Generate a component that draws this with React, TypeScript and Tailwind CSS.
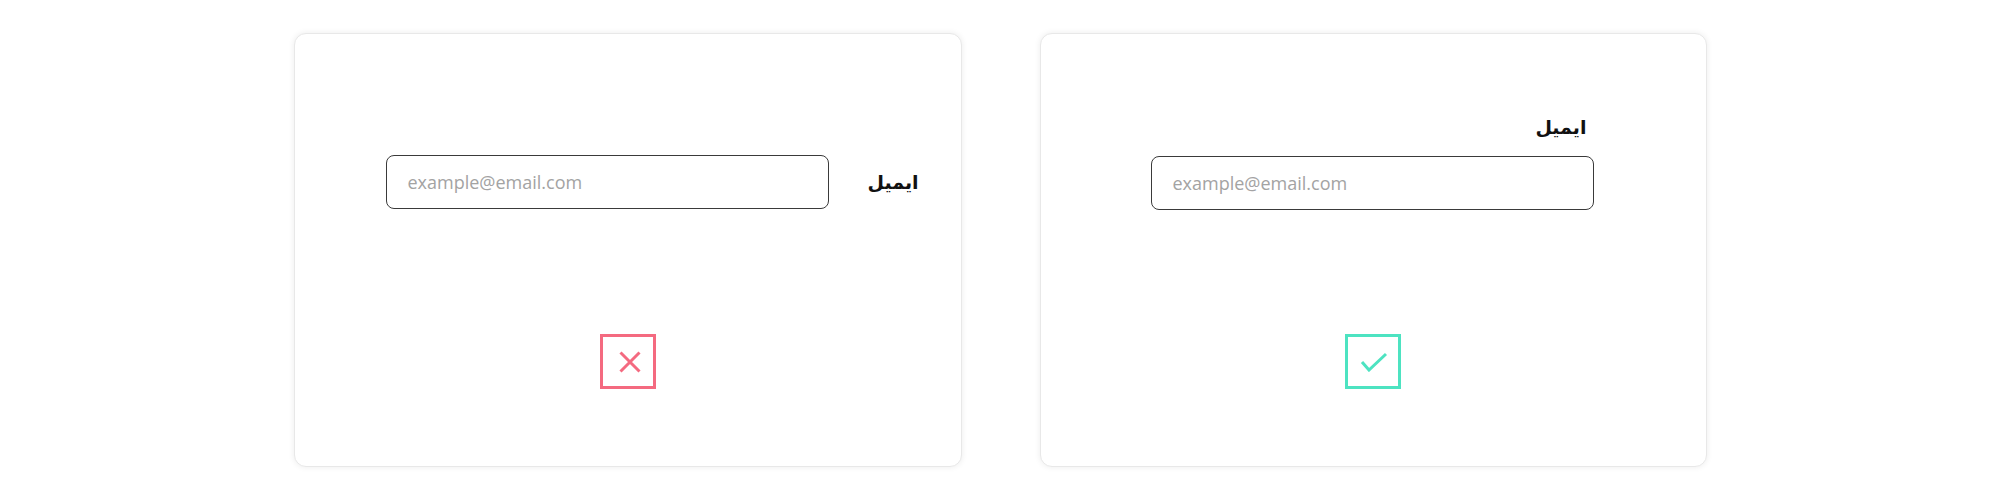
import React from "react";

const Input = () => (
  <div className="w-[443px] h-[54px] rounded-lg border border-[#3a3a3a] flex items-center pl-[21px] bg-white">
    <span className="text-[18px] text-[#a3a3a3] font-['Open_Sans',sans-serif] leading-none">
      example@email.com
    </span>
  </div>
);

const Label = () => (
  <span dir="rtl" className="text-[19px] font-bold text-[#111] font-['DejaVu_Sans',sans-serif] leading-none">
    ايميل
  </span>
);

export default function App() {
  return (
    <div className="w-[2000px] h-[500px] bg-white flex justify-center gap-[78px] pt-[33px]">
      {/* Wrong example */}
      <div className="w-[668px] h-[434px] rounded-xl border border-[#e8e8e8] shadow-[0_0_6px_rgba(0,0,0,0.08)] bg-white flex flex-col">
        <div className="flex items-center gap-[39px] pl-[91px] pt-[121px]">
          <Input />
          <Label />
        </div>
        <div className="pl-[305px] pt-[125px]">
          <div className="w-[56px] h-[55px] border-[3px] border-[#f46a80] flex items-center justify-center">
            <svg width="24" height="24" viewBox="0 0 24 24" className="ml-[4px]">
              <path d="M2.5 2.5 L21.5 21.5 M21.5 2.5 L2.5 21.5" stroke="#f46a80" strokeWidth="3" fill="none" />
            </svg>
          </div>
        </div>
      </div>

      {/* Correct example */}
      <div className="w-[667px] h-[434px] rounded-xl border border-[#e8e8e8] shadow-[0_0_6px_rgba(0,0,0,0.08)] bg-white flex flex-col">
        <div className="pl-[110px] pt-[83px] flex flex-col w-[554px]">
          <div className="flex justify-end pr-[8px] h-[20px] items-center">
            <Label />
          </div>
          <div className="mt-[19px]">
            <Input />
          </div>
        </div>
        <div className="pl-[304px] pt-[124px]">
          <div className="w-[56px] h-[55px] border-[3px] border-[#4de3c1] flex items-center justify-center">
            <svg width="28" height="20" viewBox="0 0 28 20" className="ml-[2px]">
              <path d="M2 10 L9 18 L26 2" stroke="#4de3c1" strokeWidth="3" fill="none" />
            </svg>
          </div>
        </div>
      </div>
    </div>
  );
}
